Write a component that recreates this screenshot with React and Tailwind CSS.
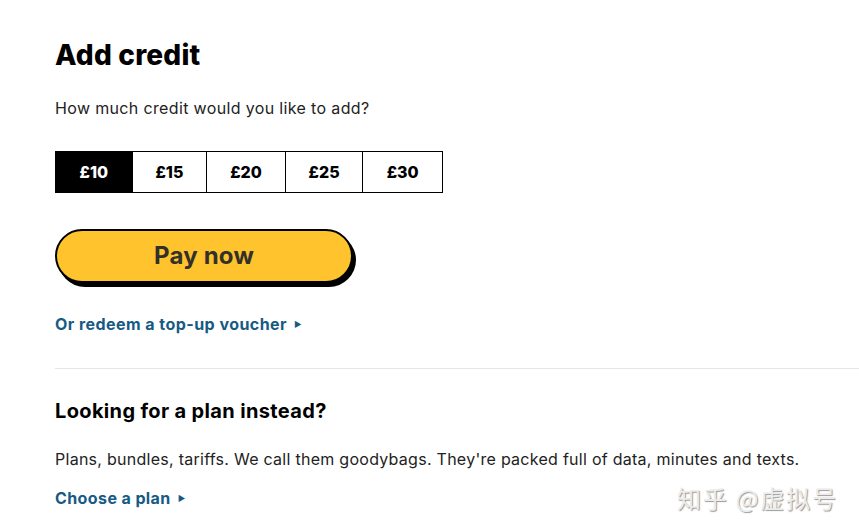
import React from "react";

const amounts = [
  ["£10", "w-[76px]"],
  ["£15", "w-[75px]"],
  ["£20", "w-[79px]"],
  ["£25", "w-[78px]"],
  ["£30", "w-[80px]"],
];

export default function App() {
  const font = { fontFamily: "Inter, 'Noto Sans', sans-serif" };
  return (
    <div className="relative min-h-[531px] w-[859px] bg-white text-[#111]" style={font}>
      <div className="pl-[55px] pt-[38px]">
        <h1 className="text-[28px] font-extrabold leading-[34px] tracking-[0.2px] text-black">Add credit</h1>
        <p className="mt-[24px] text-[16px] leading-[24px] tracking-[0.35px] text-[#222]">
          How much credit would you like to add?
        </p>
        <div className="mt-[31px] flex h-[42px] w-[388px] border border-black">
          {amounts.map(([a, w], i) => (
            <button
              key={a}
              className={
                "flex items-center justify-center text-[16px] font-extrabold " +
                w +
                " " +
                (i === 0 ? "bg-black text-white" : "border-l border-black bg-white text-black")
              }
            >
              {a}
            </button>
          ))}
        </div>
        <button className="mt-[36px] flex h-[54px] w-[298px] items-center justify-center rounded-full border-2 border-black bg-[#fec32d] text-[24px] font-bold tracking-[0.2px] text-[#33302a] shadow-[3px_4px_0_0_#000]">
          Pay now
        </button>
        <a className="mt-[29px] flex items-center gap-[7px] text-[16px] font-bold tracking-[0.45px] text-[#175a84]">
          Or redeem a top-up voucher
          <span className="text-[8px]">▶</span>
        </a>
      </div>
      <div className="ml-[55px] mt-[32px] h-px bg-[#e6e6e6]" />
      <div className="pl-[55px] pt-[29px]">
        <h2 className="text-[20px] font-bold leading-[26px] tracking-[0.35px] text-black">
          Looking for a plan instead?
        </h2>
        <p className="mt-[23px] text-[16px] leading-[24px] tracking-[0.27px] text-[#222]">
          Plans, bundles, tariffs. We call them goodybags. They're packed full of data, minutes and texts.
        </p>
        <a className="mt-[15px] flex items-center gap-[7px] text-[16px] font-bold tracking-[0.4px] text-[#175a84]">
          Choose a plan
          <span className="text-[8px]">▶</span>
        </a>
      </div>
      <div
        className="absolute left-[677px] top-[480px] text-[24px] tracking-[1.8px] text-[#ececec] [text-shadow:1px_1px_1px_#999]"
        style={{ fontFamily: "'Noto Sans CJK SC', sans-serif" }}
      >
        知乎 @虚拟号
      </div>
    </div>
  );
}
